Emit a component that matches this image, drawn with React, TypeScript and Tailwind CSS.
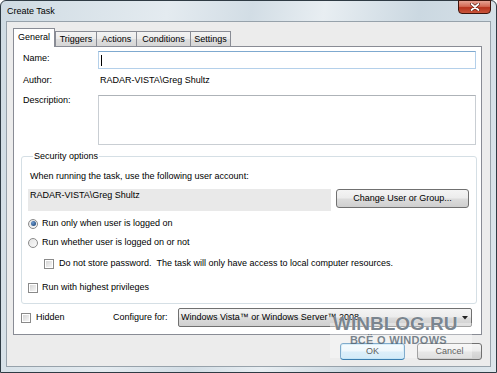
import type { ReactNode } from 'react';

const btnFace =
  'bg-[linear-gradient(to_bottom,#f4f4f4_0%,#ececec_48%,#dcdcdc_52%,#cfcfcf_100%)]';

function Radio({ checked }: { checked?: boolean }) {
  return (
    <span className="w-[10px] h-[10px] rounded-full border border-[#8a8a8a] bg-[linear-gradient(135deg,#e3e3e3,#fbfbfb)] flex items-center justify-center shrink-0">
      {checked && <span className="w-[5px] h-[5px] rounded-full bg-[radial-gradient(circle_at_35%_35%,#6d9bd1,#123a6b)]" />}
    </span>
  );
}

function Check() {
  return (
    <span className="w-[10px] h-[10px] border border-[#8a8a8a] bg-white p-px shrink-0 flex">
      <span className="flex-1 bg-[linear-gradient(135deg,#d6d6d6,#f6f6f6)]" />
    </span>
  );
}

function Tab({ label, w, first }: { label: string; w: string; first?: boolean }) {
  return (
    <div
      className={`${w} ${first ? '' : '-ml-px'} h-[15px] border border-b-0 border-[#898c95] bg-[linear-gradient(to_bottom,#f3f3f3_0%,#ebebeb_50%,#dedede_51%,#d6d6d6_100%)] flex items-center justify-center`}
    >
      {label}
    </div>
  );
}

function Row({ children, className = '' }: { children: ReactNode; className?: string }) {
  return <div className={`flex items-center ${className}`}>{children}</div>;
}

export default function App() {
  return (
    <div className="relative w-[497px] h-[373px] overflow-hidden bg-white font-['Liberation_Sans',Arial,sans-serif] text-[9px] leading-[11px] text-black">
      {/* window frame */}
      <div className="w-full h-full flex flex-col border border-[#2f3b44] rounded-t-[6px] bg-[linear-gradient(100deg,#cfdbe3_0%,#e4ebf0_30%,#d2dde5_45%,#e8eef2_58%,#cbd8e1_75%,#dde6ec_100%)] px-[5px] pb-[5px]">
        {/* title bar */}
        <div className="h-[20px] flex items-center justify-between shrink-0">
          <span className="pl-px">Create Task</span>
          <div className="self-start -mt-px w-[33px] h-[14px] rounded-b-[4px] border border-[#3d140c] bg-[linear-gradient(to_bottom,#e7a293_0%,#d46a55_45%,#b8321c_55%,#c9563c_100%)] flex items-center justify-center">
            <svg width="10" height="8" viewBox="0 0 10 8">
              <path d="M1.5 1 L8.5 7 M8.5 1 L1.5 7" stroke="#5a1a0d" strokeWidth="3.2" strokeLinecap="round" />
              <path d="M1.5 1 L8.5 7 M8.5 1 L1.5 7" stroke="#ffffff" strokeWidth="1.8" strokeLinecap="round" />
            </svg>
          </div>
        </div>

        {/* client area */}
        <div className="flex-1 bg-[#ececec] border border-[#97a2ab] flex flex-col pl-[6px] pr-[8px] pt-[6px]">
          {/* tab strip */}
          <div className="flex items-end h-[18px] shrink-0">
            <div className="relative z-10 w-[42px] h-[19px] -mb-px border border-b-0 border-[#898c95] bg-white flex items-center justify-center pb-[2px]">
              General
            </div>
            <Tab label="Triggers" w="w-[42px]" first />
            <Tab label="Actions" w="w-[41px]" />
            <Tab label="Conditions" w="w-[55px]" />
            <Tab label="Settings" w="w-[41px]" />
          </div>

          {/* tab page */}
          <div className="h-[289px] shrink-0 bg-white border border-[#898c95] pl-[9px] pr-[5px] pt-[4px] flex flex-col">
            <div className="flex h-[18px]">
              <span className="w-[75px] pt-[2px]">Name:</span>
              <div className="flex-1 border border-[#b4d0ea] border-t-[#7fa9cf] flex items-center pl-[2px]">
                <span className="w-px h-[11px] bg-black" />
              </div>
            </div>

            <Row className="mt-[5px] h-[13px]">
              <span className="w-[77px] -mt-px">Author:</span>
              <span>RADAR-VISTA\Greg Shultz</span>
            </Row>

            <div className="flex mt-[8px]">
              <span className="w-[75px]">Description:</span>
              <div className="flex-1 h-[50px] border border-[#c9ced3] border-t-[#aeb3b8]" />
            </div>

            {/* security options */}
            <fieldset className="mt-[6px] -ml-[2px] mr-0 border border-[#d5dfe5] rounded-[3px] pl-[6px] pr-[7px] pb-[9px] pt-[9px]">
              <legend className="ml-[5px] px-[1px]">Security options</legend>
              <div className="ml-[2px]">When running the task, use the following user account:</div>
              <div className="flex mt-[7px]">
                <div className="w-[303px] h-[22px] bg-[#e9e9e9] pl-[2px] pt-px">RADAR-VISTA\Greg Shultz</div>
                <div className={`ml-[5px] w-[133px] h-[19px] rounded-[3px] border border-[#707070] ${btnFace} flex items-center justify-center`}>
                  Change User or Group...
                </div>
              </div>
              <Row className="mt-[6px] h-[13px] gap-[4px]">
                <Radio checked />
                <span>Run only when user is logged on</span>
              </Row>
              <Row className="mt-[6px] h-[13px] gap-[4px]">
                <Radio />
                <span>Run whether user is logged on or not</span>
              </Row>
              <Row className="mt-[8px] h-[13px] gap-[5px] ml-[16px]">
                <Check />
                <span>Do not store password.&nbsp; The task will only have access to local computer resources.</span>
              </Row>
              <Row className="mt-[11px] h-[13px] gap-[4px]">
                <Check />
                <span>Run with highest privileges</span>
              </Row>
            </fieldset>

            {/* bottom row */}
            <Row className="mt-[4px] h-[19px] -ml-[2px]">
              <div className="w-[92px] flex items-center gap-[5px]">
                <Check />
                <span>Hidden</span>
              </div>
              <span className="w-[65px]">Configure for:</span>
              <div className={`flex-1 mr-[4px] h-[19px] rounded-[2px] border border-[#707070] ${btnFace} flex items-center justify-between pl-[2px] pr-[3px]`}>
                <span>Windows Vista™ or Windows Server™ 2008</span>
                <svg width="6" height="4" viewBox="0 0 6 4">
                  <path d="M0 0 H6 L3 3.5 Z" fill="#222" />
                </svg>
              </div>
            </Row>
          </div>

          {/* dialog buttons */}
          <div className="flex justify-end gap-[12px] mt-[8px]">
            <div className="w-[65px] h-[17px] rounded-[3px] border border-[#3c7fb1] bg-[linear-gradient(to_bottom,#f2f9fd_0%,#e5f3fb_48%,#c9e6f7_52%,#bde0f5_100%)] shadow-[inset_0_0_0_1px_#c4e5f6] flex items-center justify-center">
              OK
            </div>
            <div className={`w-[65px] h-[17px] rounded-[3px] border border-[#707070] ${btnFace} flex items-center justify-center`}>
              Cancel
            </div>
          </div>
        </div>
      </div>

      {/* site watermark */}
      <div className="absolute left-[330px] top-[323px] w-[142px] h-[35px] bg-white/35" />
      <div className="absolute left-[333px] top-[314px] font-bold text-[19px] leading-[20px] text-[#4f5d6a]/75 [text-shadow:0_0_1px_#ffffff]">
        WINBLOG.RU
      </div>
      <div className="absolute left-[350px] top-[334px] font-bold text-[11px] leading-[12px] text-[#4f5d6a]/75 tracking-[0.3px]">
        ВСЁ О WINDOWS
      </div>
    </div>
  );
}
